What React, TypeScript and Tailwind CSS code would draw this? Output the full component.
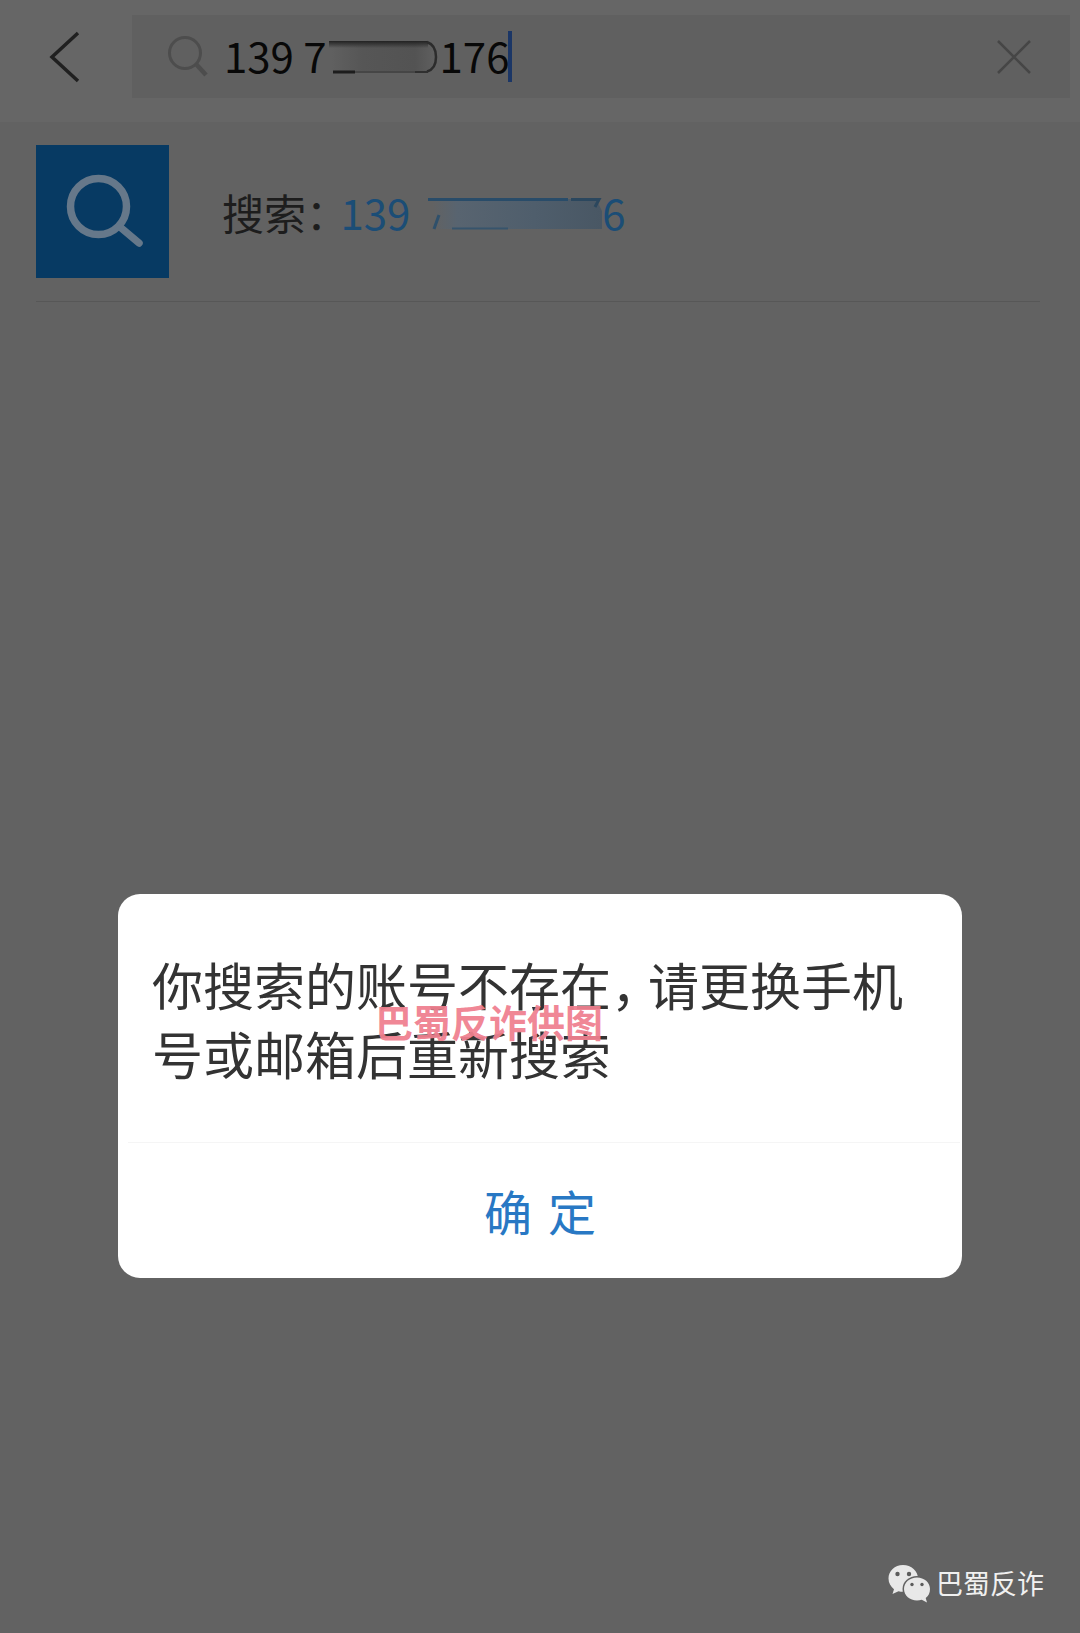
import { useState } from "react";

const BackIcon = () => (
  <svg viewBox="0 0 32 52" className="w-8 h-[52px]" fill="none" stroke="#202020" strokeWidth="3.500">
    <path d="M30 2 4 26 30 50" />
  </svg>
);

const CloseIcon = () => (
  <svg viewBox="0 0 36 36" className="w-9 h-9" fill="none" stroke="#464646" strokeWidth="2.500">
    <path d="M2 2 34 34M34 2 2 34" />
  </svg>
);

const SmallSearchIcon = () => (
  <svg viewBox="0 0 40 42" className="w-10 h-[42px] shrink-0" fill="none" stroke="#4d4d4d" strokeWidth="3">
    <circle cx="17" cy="17" r="15.5" />
    <path d="M28 28 38 39" strokeWidth="4.500" />
  </svg>
);

const BigSearchIcon = () => (
  <svg viewBox="0 0 133 133" className="w-full h-full" fill="none" stroke="#66788a" strokeLinecap="round">
    <circle cx="62.500" cy="61.5" r="28" strokeWidth="7.500" />
    <path d="M84 82 103 98" strokeWidth="7.500" />
  </svg>
);

const WechatIcon = () => (
  <svg viewBox="0 0 44 40" className="w-11 h-10" fill="#e8e8e8">
    <path d="M15 2C6.700 2 0.500 8 0.500 15.500c0 4.500 2.200 8.200 5.500 10.700L4.500 31l6-2.800c1.500.4 3 .6 4.500.6 8.300 0 15-6 15-13.300S23.300 2 15 2z" />
    <ellipse cx="29" cy="26" rx="14.500" ry="13" fill="#626262" />
    <path d="M29 14.500c-7.200 0-13 5-13 11.500s5.800 11.500 13 11.500c1.700 0 3.200-.2 4.700-.7l5.300 2.700-1.300-4.500C40.500 33 42 29.700 42 26c0-6.500-5.800-11.500-13-11.500z" />
    <g fill="#5c5c5c">
      <circle cx="9.500" cy="11" r="2.200" />
      <circle cx="21" cy="11" r="2.200" />
      <circle cx="24" cy="21.500" r="1.700" />
      <circle cx="34" cy="21.500" r="1.700" />
    </g>
  </svg>
);

// erased digits in the search box
const InputSmudge = () => (
  <svg viewBox="0 0 110 34" className="absolute left-[105px] top-[17px] w-[110px] h-[34px]" fill="none">
    <defs>
      <linearGradient id="smudgeGray" x1="0" y1="0" x2="1" y2="0">
        <stop offset="0" stopColor="#606060" />
        <stop offset="0.300" stopColor="#565656" />
        <stop offset="0.800" stopColor="#535353" />
        <stop offset="1" stopColor="#606060" />
      </linearGradient>
      <linearGradient id="smudgeTop" x1="0" y1="0" x2="0" y2="1">
        <stop offset="0" stopColor="#222222" />
        <stop offset="1" stopColor="#222222" stopOpacity="0" />
      </linearGradient>
    </defs>
    <path d="M2 1H98Q107 4 107 17T98 32H2z" fill="url(#smudgeGray)" />
    <path d="M0 1H99V8H0z" fill="url(#smudgeTop)" />
    <path d="M98 2Q107 5 107 17T98 31.500" stroke="#2c2c2c" strokeWidth="2.500" />
    <path d="M4 32H26" stroke="#1d1d1d" strokeWidth="3" />
    <path d="M26 32H88" stroke="#464646" strokeWidth="2" />
    <path d="M86 32H99" stroke="#303030" strokeWidth="2" />
  </svg>
);

const ResultSmudge = () => (
  <svg viewBox="0 0 174 34" className="w-[174px] h-[34px]" fill="none">
    <defs>
      <linearGradient id="smudgeBlue" x1="0" y1="0" x2="1" y2="0">
        <stop offset="0" stopColor="#626262" />
        <stop offset="0.150" stopColor="#586470" />
        <stop offset="0.600" stopColor="#4f5e6c" />
        <stop offset="1" stopColor="#495764" />
      </linearGradient>
    </defs>
    <path d="M4 2H168L174 14V32H10z" fill="url(#smudgeBlue)" />
    <path d="M0 2.500H140" stroke="#294c69" strokeWidth="3" />
    <path d="M143 2.500H171L167 10" stroke="#2b475e" strokeWidth="3" />
    <path d="M11 18 6 32" stroke="#2f506b" strokeWidth="3" />
    <path d="M24 31.500H80" stroke="#37546c" strokeWidth="2" />
  </svg>
);

const SearchHeader = () => {
  const [keyword, setKeyword] = useState("139 7" + "\u00a0".repeat(12) + "176");

  return (
    <header className="flex items-center h-[122px] pl-12 pr-[10px] pb-[9px] bg-[#666666]">
      <button type="button" aria-label="返回" className="shrink-0">
        <BackIcon />
      </button>
      <div className="flex items-center flex-1 h-[83px] ml-[52px] pl-9 pr-[38px] bg-[#606060]">
        <SmallSearchIcon />
        <div className="relative flex items-center ml-4">
          <input
            type="text"
            aria-label="搜索"
            value={keyword}
            onChange={(e) => setKeyword(e.target.value)}
            className="w-[284px] h-[68px] pb-1 text-[42px] text-[#080808] bg-transparent outline-none"
          />
          <InputSmudge />
          <span className="w-1 h-[51px] bg-[#1b3666]" />
        </div>
        <button type="button" aria-label="清除" className="ml-auto">
          <CloseIcon />
        </button>
      </div>
    </header>
  );
};

const SearchResult = () => (
  <a href="#result" className="flex items-center ml-9 mr-10 h-[180px] border-b border-[#575757]">
    <span className="w-[133px] h-[133px] bg-[#073a63]">
      <BigSearchIcon />
    </span>
    <span className="flex items-center ml-[53px] text-[42px] leading-[60px] whitespace-pre text-[#1d1d1d]">
      <span>{"搜索： "}</span>
      <span className="ml-1 text-[#1b4d76]">139</span>
      <span className="flex items-center ml-[18px] text-[#1b4d76]">
        <span className="pt-1">
          <ResultSmudge />
        </span>
        <span>6</span>
      </span>
    </span>
  </a>
);

const AlertDialog = () => (
  <div className="absolute inset-0 flex flex-col justify-end px-[118px] pb-[355px]">
    <div role="alertdialog" aria-labelledby="message" className="relative rounded-[22px] bg-white">
      <p
        id="message"
        className="h-[248px] pl-[34px] pr-10 pt-[56px] text-[51px] leading-[69px] text-[#333333]"
      >
        你搜索的账号不存在， 请更换手机号或邮箱后重新搜索
      </p>
      <div className="ml-[10px] mr-[2px] h-px bg-[#f5f5f5]" />
      <button
        type="button"
        className="flex items-center justify-center gap-4 w-full h-[135px] pb-[2px] text-[48px] text-[#2878c4]"
      >
        <span>确</span>
        <span>定</span>
      </button>
      <span className="absolute left-[257px] top-[99px] text-[38px] leading-[56px] font-bold text-[#f0808f]/95">
        巴蜀反诈供图
      </span>
    </div>
  </div>
);

const App = () => {
  return (
    <div className="relative min-h-screen bg-[#626262] font-['Noto_Sans_CJK_SC',sans-serif] [font-feature-settings:'halt']">
      <SearchHeader />
      <SearchResult />
      <AlertDialog />
      <div className="absolute right-9 bottom-[30px] flex items-center gap-1 text-[27px] leading-[40px] text-[#f0f0f0]">
        <WechatIcon />
        <span>巴蜀反诈</span>
      </div>
    </div>
  );
};

export default App;
